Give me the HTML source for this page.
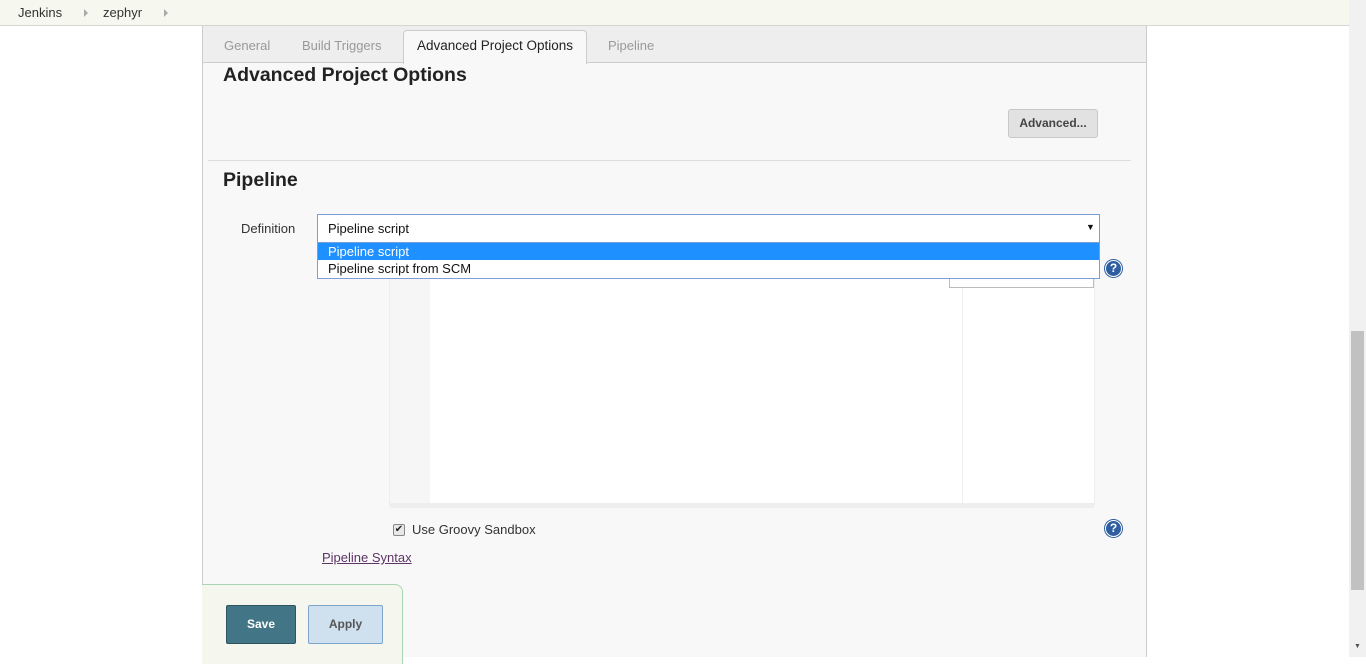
<!DOCTYPE html>
<html><head><meta charset="utf-8"><style>
*{box-sizing:border-box;margin:0;padding:0}
body{width:1366px;height:657px;overflow:hidden;background:#fff;font-family:"Liberation Sans",Arial,sans-serif;font-size:13px;color:#333;position:relative}
.abs{position:absolute}
.crumb{left:0;top:0;width:1349px;height:26px;background:#f6f7ef;border-bottom:1px solid #d3d7cf}
.crumb span{position:absolute;top:5px;font-size:13px;color:#333}
.tri{position:absolute;top:9px;width:0;height:0;border-left:4px solid #aaa;border-top:4px solid transparent;border-bottom:4px solid transparent}
.main{left:202px;top:26px;width:945px;height:631px;background:#f8f8f8;border-left:1px solid #ccc;border-right:1px solid #ccc}
.tabs{left:203px;top:26px;width:943px;height:37px;background:#eee;border-bottom:1px solid #ccc}
.tab{position:absolute;top:12px;color:#999;font-size:13px}
.atab{left:403px;top:30px;width:184px;height:34px;background:#f8f8f8;border:1px solid #ccc;border-bottom:none;border-radius:4px 4px 0 0;color:#222;font-size:13.5px;text-align:center;padding-top:7px}
h2{position:absolute;font-size:19.5px;font-weight:bold;color:#222}
.help{width:17px;height:17px;border-radius:50%;background:#2e5ea0;border:1px solid #fff;box-shadow:0 0 0 1px #2e5ea0;color:#fff;font-weight:bold;font-size:12px;text-align:center;line-height:15px}
</style></head><body>
<div class="abs crumb"><span style="left:18px">Jenkins</span><div class="tri" style="left:84px"></div><span style="left:103px">zephyr</span><div class="tri" style="left:164px"></div></div>
<div class="abs main"></div>
<div class="abs tabs"><span class="tab" style="left:21px">General</span><span class="tab" style="left:99px">Build Triggers</span><span class="tab" style="left:405px">Pipeline</span></div>
<div class="abs atab">Advanced Project Options</div>
<h2 style="left:223px;top:64px">Advanced Project Options</h2>
<div class="abs" style="left:1008px;top:109px;width:90px;height:29px;background:#e2e2e2;border:1px solid #c8c8c8;border-radius:3px;font-size:12px;font-weight:bold;color:#444;text-align:center;line-height:27px">Advanced...</div>
<div class="abs" style="left:208px;top:160px;width:923px;height:1px;background:#ddd"></div>
<h2 style="left:223px;top:169px">Pipeline</h2>
<div class="abs" style="left:241px;top:221px;color:#333">Definition</div>
<div class="abs" style="left:389px;top:258px;width:706px;height:250px;background:#eee;border-radius:3px"></div>
<div class="abs" style="left:390px;top:258px;width:40px;height:245px;background:#f6f6f6"></div>
<div class="abs" style="left:430px;top:258px;width:664px;height:245px;background:#fff"></div>
<div class="abs" style="left:962px;top:258px;width:1px;height:245px;background:#f0f0f0"></div>
<div class="abs" style="left:949px;top:262px;width:145px;height:26px;background:#fff;border:1px solid #bbb"></div>
<div class="abs help" style="left:1105px;top:260px">?</div>
<div class="abs" style="left:317px;top:214px;width:783px;height:29px;background:#fff;border:1px solid #7a9fd8"></div>
<div class="abs" style="left:328px;top:221px;color:#111">Pipeline script</div>
<div class="abs" style="left:1086px;top:222px;font-size:9px;color:#111">▼</div>
<div class="abs" style="left:317px;top:242px;width:783px;height:37px;background:#fff;border:1px solid #7a9fd8"></div>
<div class="abs" style="left:318px;top:243px;width:781px;height:17px;background:#1e90ff"></div>
<div class="abs" style="left:328px;top:244px;color:#fff">Pipeline script</div>
<div class="abs" style="left:328px;top:261px;color:#111">Pipeline script from SCM</div>
<div class="abs" style="left:393px;top:524px;width:12px;height:12px;border:1px solid #888;border-radius:2px;background:#e8e8e8;font-size:10px;line-height:10px;text-align:center;color:#222">✔</div>
<div class="abs" style="left:412px;top:522px;color:#333">Use Groovy Sandbox</div>
<div class="abs help" style="left:1105px;top:520px">?</div>
<div class="abs" style="left:322px;top:550px;color:#5c3566;text-decoration:underline">Pipeline Syntax</div>
<div class="abs" style="left:202px;top:584px;width:201px;height:80px;background:#f5f7ee;border:1px solid #a8d5b5;border-left:none;border-bottom:none;border-radius:0 8px 0 0"></div>
<div class="abs" style="left:226px;top:605px;width:70px;height:39px;background:#427585;border:1px solid #2d5561;border-radius:2px;color:#fff;font-weight:bold;font-size:12px;text-align:center;line-height:37px">Save</div>
<div class="abs" style="left:308px;top:605px;width:75px;height:39px;background:#cfe0ef;border:1px solid #7ea5cc;border-radius:2px;color:#555;font-weight:bold;font-size:12px;text-align:center;line-height:37px">Apply</div>
<div class="abs" style="left:1349px;top:0;width:17px;height:657px;background:#f1f1f1"></div>
<div class="abs" style="left:1351px;top:331px;width:13px;height:259px;background:#c1c1c1"></div>
<div class="abs" style="left:1354px;top:643px;font-size:7px;color:#555">▼</div>
</body></html>
